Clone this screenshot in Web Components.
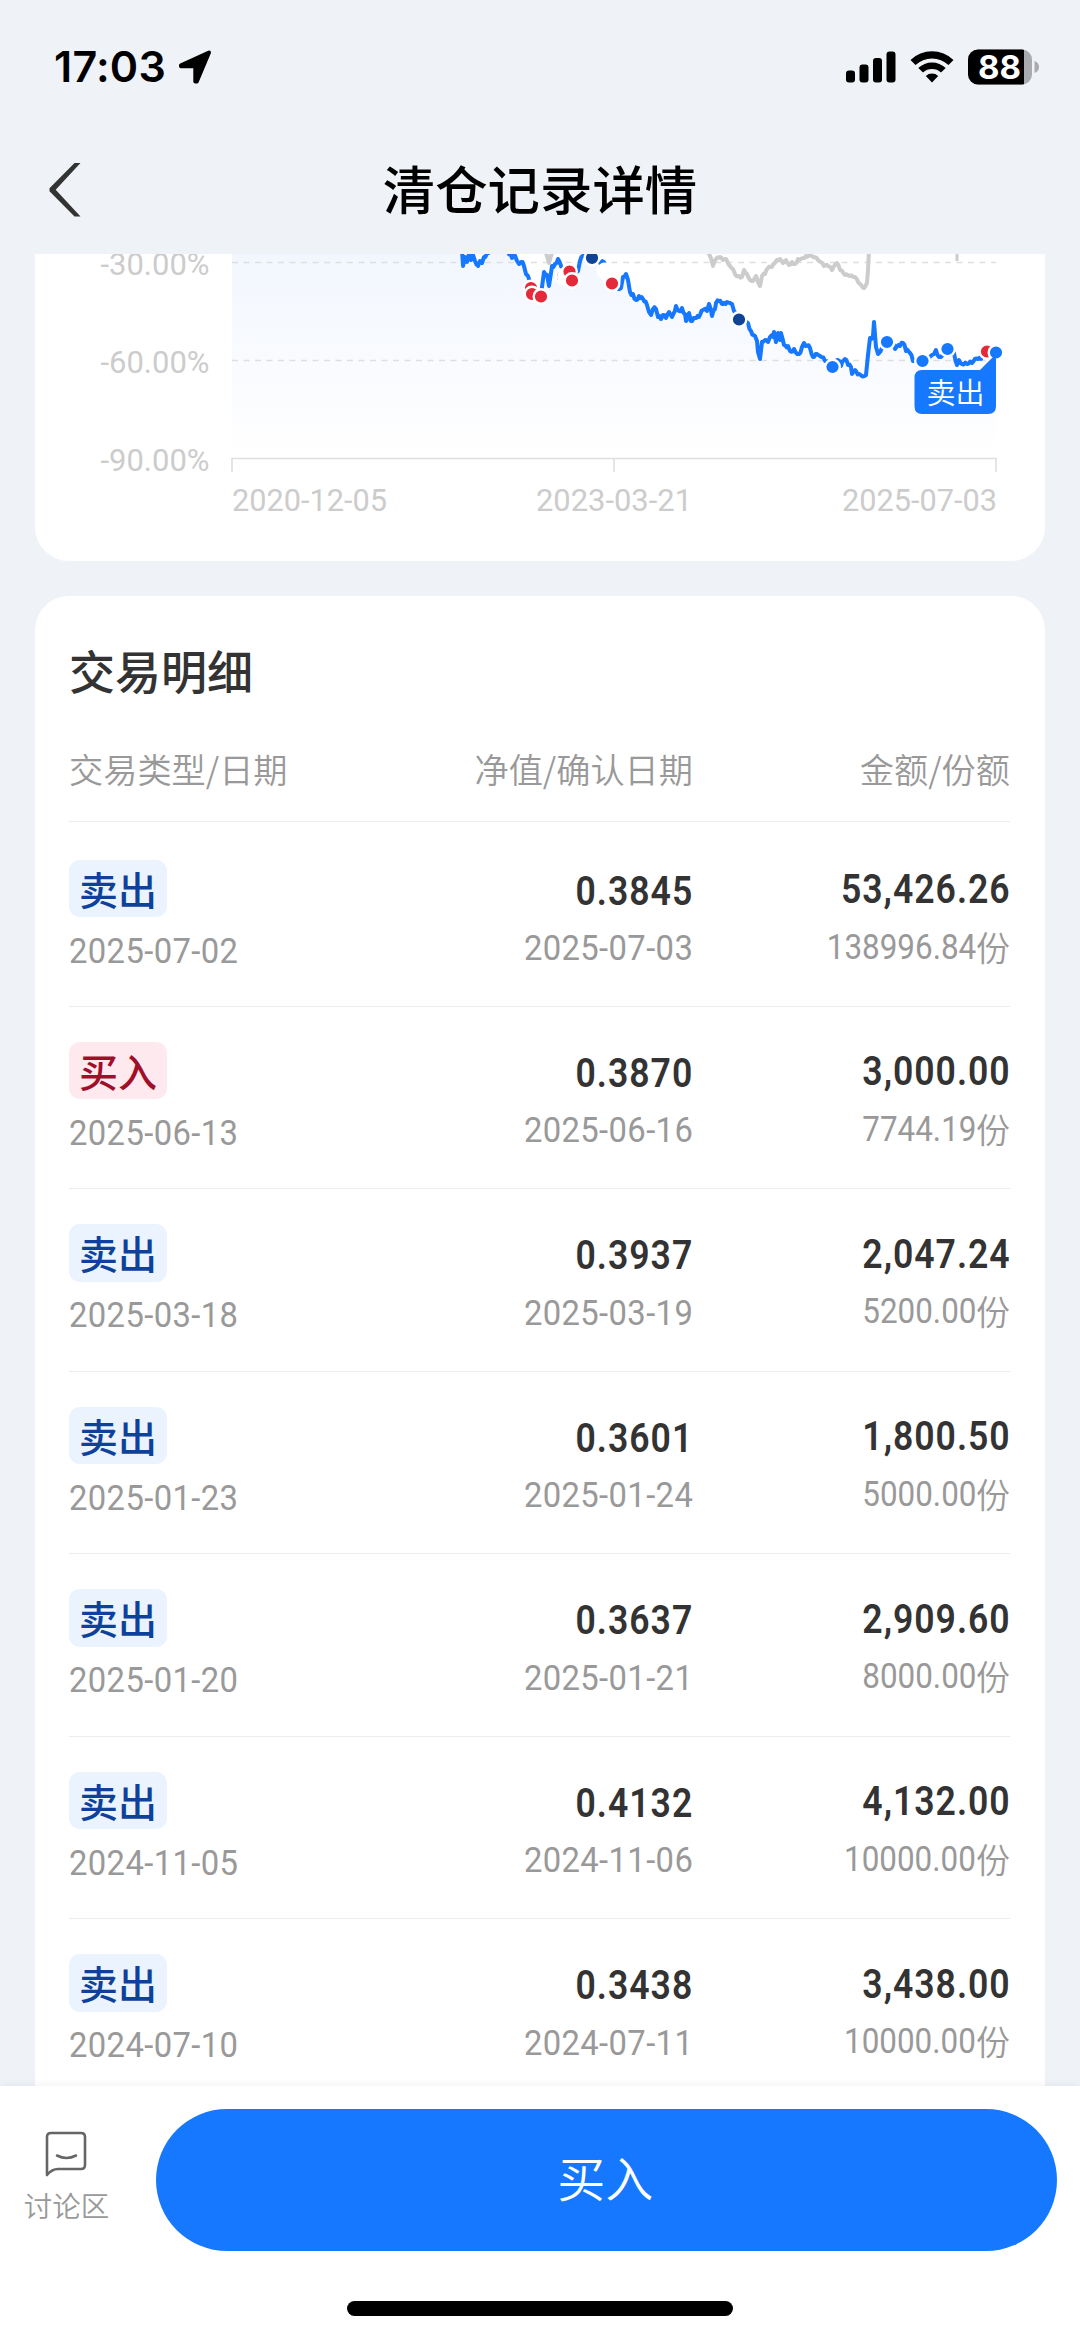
<!DOCTYPE html>
<html lang="zh-CN">
<head>
<meta charset="UTF-8">
<title>清仓记录详情</title>
<style>
    html, body { margin: 0; height: 100%; }
    body {
        background: #eff3f8; color: #333; overflow: hidden;
        font-family: "Noto Sans CJK SC", sans-serif;
    }
</style>
</head>
<body>
<record-page></record-page>

<script>
// Cifras estrechas: escala horizontal sobre Roboto
class NumText extends HTMLElement {
    constructor() {
        super();
        this.attachShadow({ mode: 'open' });
        this.shadowRoot.innerHTML = `
            <style>
                :host {
                    display: inline-block; white-space: nowrap;
                    font-family: Roboto, sans-serif;
                    transform: scaleX(var(--num-scale, 0.9)); transform-origin: var(--num-origin, right) center;
                }
            </style>
            <slot></slot>
        `;
    }
}
customElements.define('num-text', NumText);

class StatusBar extends HTMLElement {
    constructor() {
        super();
        this.attachShadow({ mode: 'open' });
        this.shadowRoot.innerHTML = `
            <style>
                :host {
                    display: flex; align-items: center; justify-content: space-between;
                    height: 132px; padding: 0 40px 0 54px; box-sizing: border-box; color: #000;
                }
                .left, .right { display: flex; align-items: center; }
                .time { font: 600 43px/52px Inter, sans-serif; letter-spacing: 0.2px; }
                .left svg { margin-left: 12px; margin-top: 1px; }
                .right { gap: 14px; padding-top: 1px; }
                .right svg { overflow: visible; }
                .num { font: 700 33px Inter, sans-serif; }
            </style>
            <div class="left">
                <span class="time">17:03</span>
                <svg width="34" height="36" viewBox="0 0 34 36"><path d="M3 16.2 31 3.500 18.800 32.500H17.300V17.300H3Z" stroke="#000" stroke-width="4" stroke-linejoin="round"/></svg>
            </div>
            <div class="right">
                <svg width="50" height="36" viewBox="0 0 50 36">
                    <rect x="0" y="21.500" width="9" height="12" rx="3"/>
                    <rect x="13.500" y="15.500" width="9" height="18" rx="3"/>
                    <rect x="27" y="9" width="9" height="24.500" rx="3"/>
                    <rect x="40.500" y="2.500" width="9" height="31" rx="3"/>
                </svg>
                <svg width="44" height="36" viewBox="0 0 44 36">
                    <path d="M.5 11A31 31 0 0 1 43.500 11L38.500 16A24 24 0 0 0 5.500 16Z"/>
                    <path d="M8.300 19A20 20 0 0 1 35.700 19L31 23.500A13.500 13.500 0 0 0 13 23.500Z"/>
                    <path d="M15.800 27A9 9 0 0 1 28.200 27L22 33.500Z"/>
                </svg>
                <svg width="72" height="36" viewBox="0 0 72 36">
                    <defs><clipPath id="cell"><rect y="0.500" width="64" height="35" rx="10"/></clipPath></defs>
                    <g clip-path="url(#cell)">
                        <rect width="64" height="36" fill="#a9abae"/>
                        <rect width="56" height="36"/>
                    </g>
                    <path d="M66.500 12Q71 13.500 71 18T66.500 24Z" fill="#a9abae"/>
                    <text class="num" x="10" y="30" fill="#fff" textLength="43" lengthAdjust="spacingAndGlyphs">88</text>
                </svg>
            </div>
        `;
    }
}
customElements.define('status-bar', StatusBar);

class NavBar extends HTMLElement {
    constructor() {
        super();
        this.attachShadow({ mode: 'open' });
        this.shadowRoot.innerHTML = `
            <style>
                :host {
                    display: grid; grid-template-columns: 100px 1fr 100px; align-items: center;
                    height: 122px; box-sizing: border-box; padding-bottom: 6px;
                }
                svg { margin-left: 49px; }
                h1 {
                    margin: 0; padding-bottom: 7px; text-align: center; color: #000;
                    font-size: 52.400px; font-weight: 500; line-height: 80px;
                }
            </style>
            <svg width="32" height="54" viewBox="0 0 31 54"><polygon points="25,0 31,0 6.200,26.800 31,53.600 25,53.600 0,28.300 0,25.300" fill="#333"/></svg>
            <h1><slot></slot></h1>
        `;
    }
}
customElements.define('nav-bar', NavBar);

class ProfitChart extends HTMLElement {
    constructor() {
        super();
        this.attachShadow({ mode: 'open' });
        this.render();
    }

    // Añade pequeños picos entre los puntos de una serie
    noisy(points, amp) {
        const p = points.split(' ').map(s => s.split(',').map(Number));
        const out = [p[0]];
        for (let i = 1; i < p.length; i++) {
            const [x0, y0] = p[i - 1];
            const [x1, y1] = p[i];
            const steps = Math.min(4, Math.round((x1 - x0) / 1.6));
            for (let k = 1; k < steps; k++) {
                const t = k / steps;
                const off = amp * Math.sin(i * 12.9 + k * 4.1) * (k % 2 ? 1 : -1);
                out.push([(x0 + (x1 - x0) * t).toFixed(1), (y0 + (y1 - y0) * t + off).toFixed(1)]);
            }
            out.push(p[i]);
        }
        return out.map(q => q.join(',')).join(' ');
    }

    dots() {
        // [x, y, color], en orden de dibujo
        const list = [
            [531, 288, '#e3293a'], [532, 294, '#e3293a'], [541, 296.5, '#e3293a'],
            [563, 276.5, '#e3293a'], [565.5, 277, '#fff'],
            [569.5, 271.5, '#e3293a'], [572, 280.5, '#e3293a'],
            [592, 258, '#0f4396'], [605, 271, '#fff'],
            [611, 279, '#f3a3ab'], [612, 281, '#fff'], [612, 283.5, '#e3293a'],
            [739, 319.5, '#0f4396'], [832.5, 367, '#1677ff'], [887, 342, '#1677ff'],
            [922.5, 361, '#1677ff'], [947.5, 349, '#1677ff'], [987, 351.5, '#e3293a'],
            [996, 352.5, '#1677ff']
        ];
        return list.map(([x, y, c]) => `<circle cx="${x}" cy="${y}" r="7.300" fill="${c}" stroke="#fff" stroke-width="2.400"/>`).join('');
    }

    render() {
        const line = this.noisy('462,250 463,266 465,257 467,262 469,254 471,260 473,255 475,261 478,266 480,261 482,263 484,257 487,253 492,248 508,252 512,258 514,254 517,261 519,264 521,262 524,266 526,274 528,276 531,288 541,296 542,287 544,272 547,275 549,286 551,273 552,266 555,264 558,259 560,263 566,278 572,281 578,271 580,261 583,256 588,246 601,264 604,262 608,274 614,285 621,288 623,277 626,274 628,280 630,292 633,294 636,300 639,296 643,299 647,305 649,312 651,315 653,309 656,309 658,317 661,319 663,315 666,318 669,312 672,317 676,306 679,311 682,308 685,314 686,321 689,313 691,321 695,318 699,317 703,310 707,311 709,304 712,316 715,309 716,303 719,301 723,304 727,302 730,303 732,304 734,311 748,323 751,331 755,336 757,341 758,352 760,359 762,342 768,342 770,337 773,337 774,332 776,342 778,333 780,340 781,333 784,345 788,346 790,351 794,349 799,354 802,347 804,343 810,348 813,357 817,354 820,356 825,361 833,367 838,360 841,366 845,359 848,365 851,367 852,374 855,370 859,374 866,375 868,355 870,338 873,336 874,322 876,347 878,354 887,342 891,342 895,349 900,346 903,343 906,351 910,353 913,361 920,362 929,358 932,355 934,354 936,350 939,357 947,349 954,353 957,365 959,360 962,364 967,364 972,363 978,359 981,359 985,353 996,353', 2);
        const bench = this.noisy('707,252 710,256 713,266 716,259 720,257 723,260 726,259 730,266 733,269 735,274 739,276 742,277 744,270 747,274 750,280 753,281 756,276 758,282 760,286 762,276 765,274 768,268 772,267 776,261 780,259 783,263 786,260 789,265 792,262 795,264 798,259 803,258 806,256 812,256 818,260 824,266 828,266 832,270 837,263 840,270 845,275 850,276 855,277 860,284 864,288 867,283 868,270 869,250', 1.2);
        this.shadowRoot.innerHTML = `
            <style>
                :host { display: block; height: 307px; background: #fff; border-radius: 0 0 34px 34px; overflow: hidden; }
                svg { display: block; }
                .axis { font-family: Roboto, sans-serif; font-size: 32px; fill: #ccc; }
                .tip { font-size: 29px; font-weight: 350; fill: #fff; }
            </style>
            <svg width="1010" height="307" viewBox="35 254 1010 307">
                <defs>
                    <linearGradient id="fade" gradientUnits="userSpaceOnUse" x1="0" y1="254" x2="0" y2="458">
                        <stop offset="0" stop-color="#f2f6fe"/>
                        <stop offset="1" stop-color="#fff"/>
                    </linearGradient>
                </defs>
                <polygon points="232,250 ${line} 996,458 232,458" fill="url(#fade)"/>
                <g stroke="#dedfe1" stroke-width="1.600" fill="none">
                    <path d="M232 262.500H996M232 360.500H996" stroke-dasharray="6 5.500"/>
                    <path d="M232 472V458.500H996V472M614 459V472"/>
                </g>
                <g class="axis">
                    <text x="100.500" y="275" textLength="109" lengthAdjust="spacingAndGlyphs">-30.00%</text>
                    <text x="100.500" y="373.200" textLength="109" lengthAdjust="spacingAndGlyphs">-60.00%</text>
                    <text x="100.500" y="471.200" textLength="109" lengthAdjust="spacingAndGlyphs">-90.00%</text>
                    <text x="232" y="511" textLength="155" lengthAdjust="spacingAndGlyphs">2020-12-05</text>
                    <text x="536" y="511" textLength="156" lengthAdjust="spacingAndGlyphs">2023-03-21</text>
                    <text x="842" y="511" textLength="155" lengthAdjust="spacingAndGlyphs">2025-07-03</text>
                </g>
                <g fill="none" stroke-width="4" stroke-linejoin="round">
                    <polyline stroke="#ccc" points="545,250 547,256 549,263 551,256 553,250"/>
                    <polyline stroke="#ccc" points="${bench}"/>
                    <path stroke="#ccc" stroke-width="3" d="M957 250V261"/>
                    <polyline stroke="#1677ff" points="${line}"/>
                </g>
                ${this.dots()}
                <path d="M922 370H980L996 354V406Q996 414 988 414H922Q914.500 414 914.500 406V378Q914.500 370 922 370Z" fill="#1677ff"/>
                <text class="tip" x="955.500" y="404" text-anchor="middle">卖出</text>
            </svg>
        `;
    }
}
customElements.define('profit-chart', ProfitChart);

class TradeRow extends HTMLElement {
    constructor() {
        super();
        this.attachShadow({ mode: 'open' });
    }

    connectedCallback() {
        const [type, date, nav, confirmDate, amount, shares] = this.trade;
        const kind = type === '买入' ? 'buy' : 'sell';
        this.shadowRoot.innerHTML = `
            <style>
                :host {
                    display: grid; grid-template-columns: 280px 1fr 317px;
                    height: 182.450px; box-sizing: border-box; border-bottom: 1px solid #ebecee;
                }
                .cell { display: flex; flex-direction: column; align-items: flex-end; padding-top: 40.500px; }
                .cell.mid { padding-top: 42px; }
                .cell.first { align-items: flex-start; padding-top: 35px; --num-origin: left; }
                .badge {
                    height: 57.500px; width: 98px; border-radius: 11px; text-align: center;
                    font-size: 39px; font-weight: 500; line-height: 57.500px;
                }
                .sell { background: #eaf3fe; color: #0e429a; }
                .buy { background: #fee9ee; color: #a00f2a; }
                .main {
                    font-size: 40px; font-weight: 600; line-height: 50px; color: #333;
                    letter-spacing: 1.100px; margin-right: -0.500px; --num-scale: 0.89;
                }
                .sub {
                    display: flex; align-items: center; font-size: 34.500px; line-height: 40px; color: #999;
                    margin-top: 11.500px; letter-spacing: 0.400px; --num-scale: 0.95;
                }
                .first .sub { margin-top: 13.500px; }
                .right .sub { letter-spacing: 0; --num-scale: 0.91; }
                .sub b { font-weight: 350; font-size: 34px; line-height: 40px; }
            </style>
            <div class="cell first">
                <div class="badge ${kind}">${type}</div>
                <div class="sub"><num-text>${date}</num-text></div>
            </div>
            <div class="cell mid">
                <num-text class="main">${nav}</num-text>
                <div class="sub"><num-text>${confirmDate}</num-text></div>
            </div>
            <div class="cell right">
                <num-text class="main">${amount}</num-text>
                <div class="sub"><num-text>${shares}</num-text><b>份</b></div>
            </div>
        `;
    }
}
customElements.define('trade-row', TradeRow);

class TradeList extends HTMLElement {
    constructor() {
        super();
        this.attachShadow({ mode: 'open' });
        this.shadowRoot.innerHTML = `
            <style>
                :host {
                    display: block; height: 1600px; background: #fff; border-radius: 34px 34px 0 0;
                    padding: 37px 35px 0 34px; box-sizing: border-box;
                }
                h2 { margin: 0; font-size: 46px; font-weight: 500; line-height: 72px; color: #333; }
                .head {
                    display: grid; grid-template-columns: 280px 1fr 317px; height: 117px;
                    font-size: 34.200px; font-weight: 350; line-height: 50px; color: #999;
                    box-sizing: border-box; padding-top: 38px;
                    border-bottom: 1px solid #ebecee; margin-bottom: 2.500px;
                }
                .head span + span { text-align: right; }
            </style>
            <h2>交易明细</h2>
            <div class="head"><span>交易类型/日期</span><span>净值/确认日期</span><span>金额/份额</span></div>
        `;
    }

    setTrades(trades) {
        trades.forEach(trade => {
            const row = document.createElement('trade-row');
            row.trade = trade;
            this.shadowRoot.appendChild(row);
        });
    }
}
customElements.define('trade-list', TradeList);

class BottomBar extends HTMLElement {
    constructor() {
        super();
        this.attachShadow({ mode: 'open' });
        this.shadowRoot.innerHTML = `
            <style>
                :host {
                    display: flex; flex-direction: column; align-items: center; flex: none;
                    height: 253px; background: #fff; position: relative; box-shadow: 0 -1px 8px rgba(0,0,0,0.06);
                }
                .row { display: flex; width: 100%; height: 165px; padding: 23px 23px 0 0; box-sizing: border-box; }
                .talk { width: 133px; flex: none; display: flex; flex-direction: column; align-items: center; margin-right: 22.500px; }
                .talk svg { margin-top: 22px; margin-right: 1px; flex: none; }
                .talk span { font-size: 28.500px; font-weight: 350; line-height: 40px; color: #999; margin-top: 8px; white-space: nowrap; }
                button {
                    flex: 1; height: 141.500px; border: none; border-radius: 71px; padding: 0 2px 7px 0;
                    background: #1677ff; color: #fff; font: 350 48px "Noto Sans CJK SC", sans-serif;
                }
                .home { width: 386px; height: 15px; border-radius: 8px; background: #000; margin-top: 50px; }
            </style>
            <div class="row">
                <div class="talk">
                    <svg width="42" height="46" viewBox="0 0 42 46" fill="none" stroke="#666" stroke-width="2.600" stroke-linejoin="round" stroke-linecap="round">
                        <path d="M2 44V6Q2 2 6 2H36Q40 2 40 6V34Q40 38 36 38H13Q7 38 2 44Z"/>
                        <path d="M12 24.500Q21.500 29.500 31 24.500"/>
                    </svg>
                    <span>讨论区</span>
                </div>
                <button>买入</button>
            </div>
            <div class="home"></div>
        `;
    }
}
customElements.define('bottom-bar', BottomBar);

class RecordPage extends HTMLElement {
    constructor() {
        super();
        this.attachShadow({ mode: 'open' });
        this.shadowRoot.innerHTML = `
            <style>
                :host { display: flex; flex-direction: column; height: 2339px; }
                .content { flex: 1; min-height: 0; overflow: hidden; padding: 0 35px; }
                trade-list { margin-top: 35px; }
            </style>
            <status-bar></status-bar>
            <nav-bar>清仓记录详情</nav-bar>
            <div class="content">
                <profit-chart></profit-chart>
                <trade-list></trade-list>
            </div>
            <bottom-bar></bottom-bar>
        `;
        this.shadowRoot.querySelector('trade-list').setTrades([
            ['卖出', '2025-07-02', '0.3845', '2025-07-03', '53,426.26', '138996.84'],
            ['买入', '2025-06-13', '0.3870', '2025-06-16', '3,000.00', '7744.19'],
            ['卖出', '2025-03-18', '0.3937', '2025-03-19', '2,047.24', '5200.00'],
            ['卖出', '2025-01-23', '0.3601', '2025-01-24', '1,800.50', '5000.00'],
            ['卖出', '2025-01-20', '0.3637', '2025-01-21', '2,909.60', '8000.00'],
            ['卖出', '2024-11-05', '0.4132', '2024-11-06', '4,132.00', '10000.00'],
            ['卖出', '2024-07-10', '0.3438', '2024-07-11', '3,438.00', '10000.00']
        ]);
    }
}
customElements.define('record-page', RecordPage);
</script>
</body>
</html>
